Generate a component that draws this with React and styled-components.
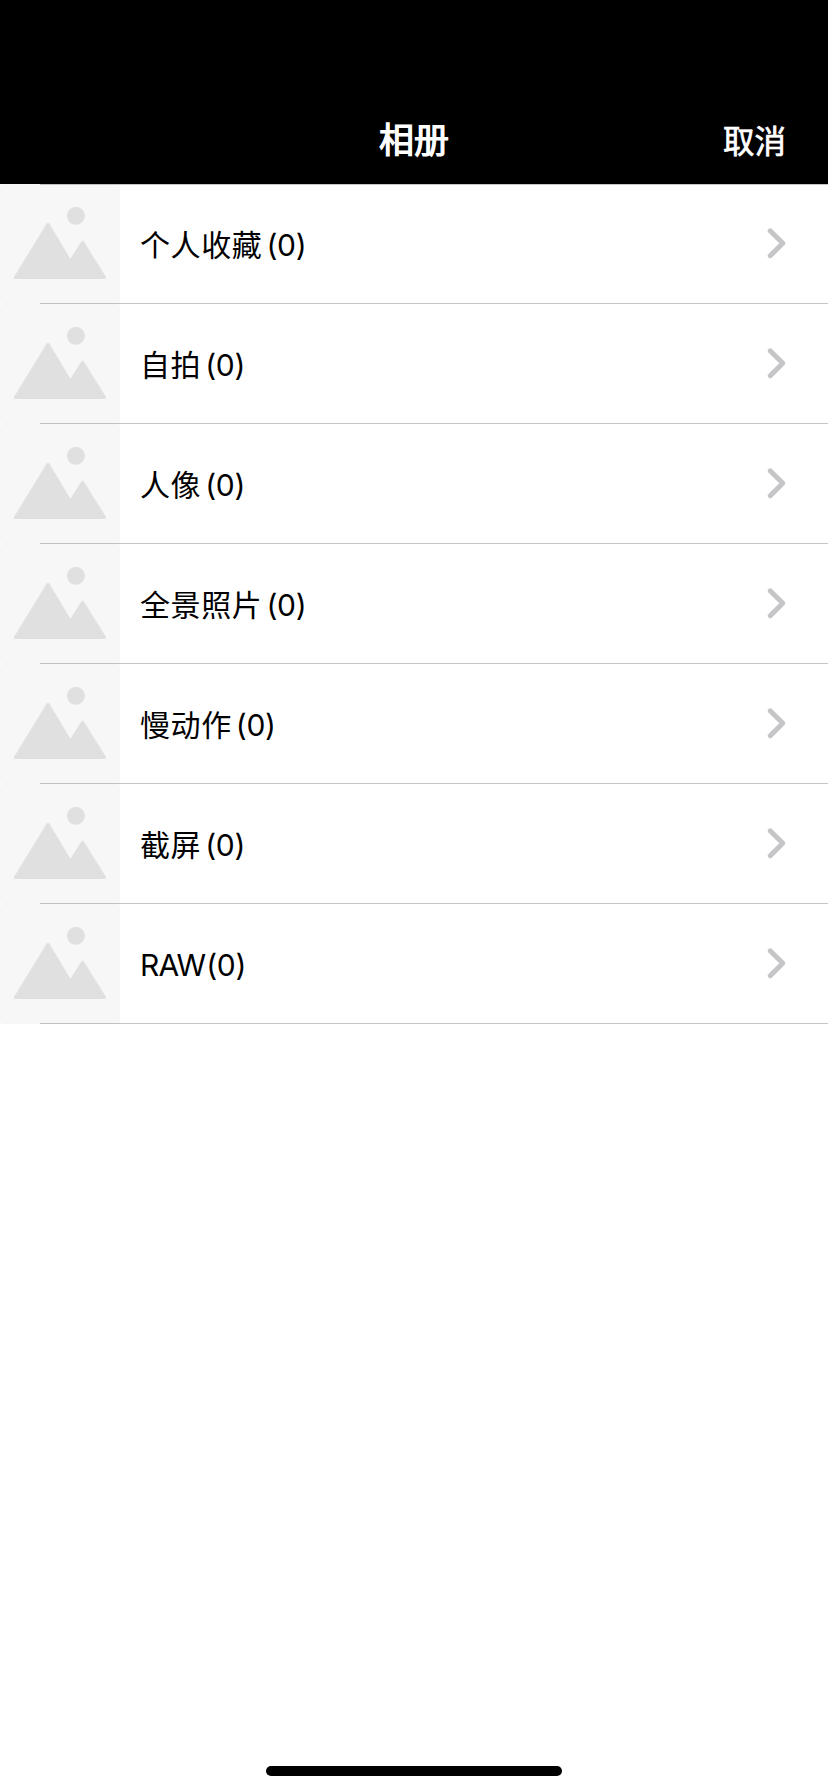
import React from "react";
import styled, { createGlobalStyle } from "styled-components";

const GlobalStyle = createGlobalStyle`
  * { box-sizing: border-box; }
  body {
    margin: 0;
    background: #fff;
    font-family: Inter, "Noto Sans CJK SC", sans-serif;
    color: #000;
  }
`;

const Screen = styled.div`
  display: flex;
  flex-direction: column;
  width: 828px;
  height: 1792px;
  overflow: hidden;
  background: #fff;
`;

const NavBar = styled.header`
  display: grid;
  grid-template-columns: 1fr auto 1fr;
  align-items: start;
  height: 184px;
  padding: 96px 42px 0;
  background: #000;
  color: #fff;
`;

const Title = styled.h1`
  grid-column: 2;
  margin: 0;
  font-size: 35px;
  line-height: 88px;
  font-weight: 400;
  -webkit-text-stroke: 1.2px currentColor;
`;

const CancelButton = styled.button`
  justify-self: end;
  padding: 2px 0 0;
  border: 0;
  background: none;
  color: inherit;
  font-family: inherit;
  font-size: 31.5px;
  line-height: 88px;
  font-weight: 400;
  -webkit-text-stroke: 0.7px currentColor;
`;

const AlbumList = styled.ul`
  flex: 1;
  margin: 0;
  padding: 0;
  list-style: none;
`;

const AlbumRow = styled.li`
  position: relative;
  display: flex;
  align-items: center;
  height: 120px;
  padding-right: 40px;

  &::after,
  &:first-child::before {
    content: "";
    position: absolute;
    left: 40px;
    right: 0;
    height: 1px;
    background: rgba(60, 60, 67, 0.29);
  }
  &::after { bottom: 0; }
  &:first-child::before { top: 0; }
`;

const Thumbnail = styled.svg`
  flex: none;
  width: 120px;
  height: 120px;
  border-radius: 3px;
  background: #f7f7f7;
`;

const Label = styled.div`
  display: flex;
  flex: 1;
  align-items: baseline;
  padding: 1px 0 0 20px;
  font-size: 30px;
  line-height: 44px;
`;

const Name = styled.span`
  letter-spacing: ${(p) => (p.$latin ? "-0.9px" : "0.6px")};
`;

const Count = styled.span`
  margin-left: ${(p) => (p.$latin ? "1px" : "4px")};
  letter-spacing: -0.3px;
`;

const Chevron = styled.svg`
  flex: none;
  width: 22px;
  height: 34px;
`;

const HomeIndicator = styled.div`
  align-self: center;
  width: 296px;
  height: 10px;
  margin-bottom: 16px;
  border-radius: 5px;
  background: #000;
`;

const albums = [
  { name: "个人收藏", count: 0 },
  { name: "自拍", count: 0 },
  { name: "人像", count: 0 },
  { name: "全景照片", count: 0 },
  { name: "慢动作", count: 0 },
  { name: "截屏", count: 0 },
  { name: "RAW", count: 0, latin: true },
];

function Placeholder() {
  return (
    <Thumbnail viewBox="0 0 120 120" aria-hidden="true">
      <g fill="#e0e0e0" stroke="#e0e0e0" strokeLinejoin="round">
        <circle cx="75.9" cy="31.8" r="9" stroke="none" />
        <path
          d="M48 40.3 L15.4 93.6 H104.6 L82.6 58.4 L70.3 77.6 Z"
          strokeWidth="3"
        />
      </g>
    </Thumbnail>
  );
}

export default function App() {
  return (
    <Screen>
      <GlobalStyle />
      <NavBar>
        <Title>相册</Title>
        <CancelButton>取消</CancelButton>
      </NavBar>
      <AlbumList>
        {albums.map(({ name, count, latin }) => (
          <AlbumRow key={name}>
            <Placeholder />
            <Label>
              <Name $latin={latin}>{name}</Name>
              <Count $latin={latin}>({count})</Count>
            </Label>
            <Chevron viewBox="0 0 22 34" aria-hidden="true">
              <path
                d="M4.2 3.8 L16.8 16.3 L4.2 28.8"
                fill="none"
                stroke="#c5c5c7"
                strokeWidth="5"
                strokeLinecap="round"
                strokeLinejoin="round"
              />
            </Chevron>
          </AlbumRow>
        ))}
      </AlbumList>
      <HomeIndicator />
    </Screen>
  );
}
